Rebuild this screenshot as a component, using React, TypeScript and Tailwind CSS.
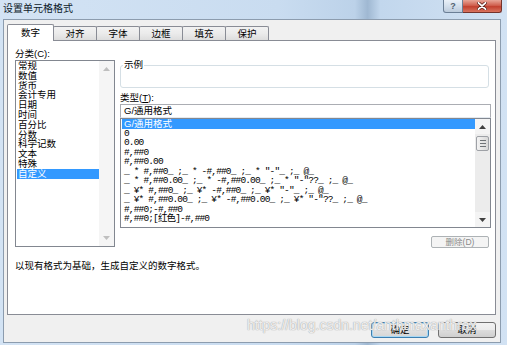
import React from "react";

const tabs = ["数字", "对齐", "字体", "边框", "填充", "保护"];

const categories = [
  "常规",
  "数值",
  "货币",
  "会计专用",
  "日期",
  "时间",
  "百分比",
  "分数",
  "科学记数",
  "文本",
  "特殊",
  "自定义",
];

const formats = [
  "G/通用格式",
  "0",
  "0.00",
  "#,##0",
  "#,##0.00",
  '_ * #,##0_ ;_ * -#,##0_ ;_ * "-"_ ;_ @_ ',
  '_ * #,##0.00_ ;_ * -#,##0.00_ ;_ * "-"??_ ;_ @_ ',
  '_ ¥* #,##0_ ;_ ¥* -#,##0_ ;_ ¥* "-"_ ;_ @_ ',
  '_ ¥* #,##0.00_ ;_ ¥* -#,##0.00_ ;_ ¥* "-"??_ ;_ @_ ',
  "#,##0;-#,##0",
  "#,##0;[红色]-#,##0",
];

function Arrow({ up, color }: { up?: boolean; color: string }) {
  return (
    <svg width="7" height="4" viewBox="0 0 7 4">
      <path d={up ? "M0 4 L3.5 0 L7 4 Z" : "M0 0 L3.5 4 L7 0 Z"} fill={color} />
    </svg>
  );
}

export default function App() {
  return (
    <div className="relative w-[507px] h-[345px] overflow-hidden bg-[linear-gradient(90deg,#d3e3f4_0%,#c9dcf0_55%,#bcd2e9_70%,#9fb8d2_72.5%,#c2d7ed_75%,#d2e2f3_100%)] font-['Liberation_Sans','Noto_Sans_CJK_SC',sans-serif] text-black">
      {/* title bar */}
      <div className="flex h-[19px] items-start">
        <div className="pl-[3px] pt-[3px] text-[10px] leading-[12px] text-[#0d1a2a]">设置单元格格式</div>
        <div className="ml-auto mr-[5px] flex">
          <div className="flex h-[13px] w-[20px] items-center justify-center rounded-bl-[3px] border border-t-0 border-[#6b7f96] bg-[linear-gradient(180deg,#e9f0f8_0%,#d3dfec_50%,#bccbdc_100%)] text-[9px] font-bold leading-[10px] text-[#51606f]">
            ?
          </div>
          <div className="flex h-[13px] w-[39px] items-center justify-center rounded-br-[3px] border border-l-0 border-t-0 border-[#74332b] bg-[linear-gradient(180deg,#e8a597_0%,#d0604f_45%,#c2402f_55%,#d9745f_100%)]">
            <svg width="10" height="8" viewBox="0 0 10 8">
              <path d="M1.5 0.8 L8.5 7.2 M8.5 0.8 L1.5 7.2" stroke="#5a1f18" strokeWidth="3.2" strokeLinecap="round" />
              <path d="M1.5 0.8 L8.5 7.2 M8.5 0.8 L1.5 7.2" stroke="#ffffff" strokeWidth="1.8" strokeLinecap="round" />
            </svg>
          </div>
        </div>
      </div>

      {/* dialog client area */}
      <div className="ml-[3px] flex h-[324px] w-[498px] flex-col border border-[#8c9cae] bg-[#f0f0f0] pl-[3px] pr-[4px]">
        {/* tabs */}
        <div className="flex h-[20px] items-end">
          {tabs.map((t, i) =>
            i === 0 ? (
              <div
                key={t}
                className="relative z-10 -mb-px flex h-[17px] w-[47px] items-center justify-center rounded-t-[2px] border border-b-0 border-[#898c95] bg-white pb-[1px] text-[9.5px] leading-[12px]"
              >
                {t}
              </div>
            ) : (
              <div
                key={t}
                className="-ml-px flex h-[14px] w-[44px] items-center justify-center rounded-t-[2px] border border-b-0 border-[#898c95] bg-[linear-gradient(180deg,#f2f2f2_0%,#ebebeb_50%,#dddddd_100%)] text-[9.5px] leading-[12px]"
              >
                {t}
              </div>
            )
          )}
        </div>

        {/* tab panel */}
        <div className="flex h-[275px] flex-col border border-[#898c95] bg-white pl-[7px] pt-[6px]">
          <div className="flex items-start">
            {/* category column */}
            <div className="flex w-[100px] flex-col">
              <div className="h-[13px] text-[9.5px] leading-[13px]">分类(C):</div>
              <div className="flex h-[187px] border border-[#828790]">
                <div className="flex-1 pl-[1px]">
                  {categories.map((c) => (
                    <div
                      key={c}
                      className={
                        c === "自定义"
                          ? "h-[9.8px] bg-[#3399ff] pl-[1px] text-[9.5px] leading-[9.8px] text-white"
                          : "h-[9.8px] pl-[1px] text-[9.5px] leading-[9.8px]"
                      }
                    >
                      {c}
                    </div>
                  ))}
                </div>
                <div className="flex w-[15px] flex-col items-center justify-between bg-[#f5f5f5] py-[6px]">
                  <Arrow up color="#bfbfbf" />
                  <Arrow color="#bfbfbf" />
                </div>
              </div>
            </div>

            {/* type column */}
            <div className="ml-[5px] flex w-[371px] flex-col">
              <div className="relative mt-[18px] h-[23px] w-[369px] rounded-[3px] border border-[#d5dfe5]">
                <div className="absolute -top-[7px] left-[2px] bg-white px-[1px] text-[9.5px] leading-[12px]">示例</div>
              </div>
              <div className="mt-[3px] h-[13px] text-[9.5px] leading-[13px]">
                类型(<span className="underline">T</span>):
              </div>
              <div className="h-[14px] border border-[#abadb3] border-b-[#e3e9ef] pl-[3px] text-[9.5px] leading-[12px]">
                G/通用格式
              </div>
              <div className="flex h-[110px] border border-[#828790]">
                <div className="flex-1 overflow-hidden pl-[1px] font-['Liberation_Mono','Noto_Sans_CJK_SC',monospace] text-[9.5px] tracking-[-0.85px]">
                  {formats.map((f, i) => (
                    <div
                      key={i}
                      className={
                        i === 0
                          ? "h-[9.5px] whitespace-pre bg-[#3399ff] pl-[2px] font-['Liberation_Sans','Noto_Sans_CJK_SC',sans-serif] leading-[9.5px] tracking-normal text-white"
                          : "h-[9.5px] whitespace-pre pl-[2px] leading-[9.5px]"
                      }
                    >
                      {f}
                    </div>
                  ))}
                </div>
                <div className="flex w-[15px] flex-col bg-[#ececec]">
                  <div className="flex h-[15px] items-center justify-center bg-[#f4f4f4]">
                    <Arrow up color="#404040" />
                  </div>
                  <div className="mx-[1px] mt-[2px] flex h-[15px] flex-col items-center justify-center gap-[2px] rounded-[2px] border border-[#9ea1a6] bg-[linear-gradient(90deg,#f3f3f3_0%,#e6e6e6_50%,#d8d8d8_100%)]">
                    <div className="h-px w-[6px] bg-[#6f7377]" />
                    <div className="h-px w-[6px] bg-[#6f7377]" />
                    <div className="h-px w-[6px] bg-[#6f7377]" />
                  </div>
                  <div className="flex-1" />
                  <div className="flex h-[15px] items-center justify-center bg-[#f4f4f4]">
                    <Arrow color="#404040" />
                  </div>
                </div>
              </div>
              <div className="mr-[2px] mt-[8px] flex h-[12px] w-[58px] items-center justify-center self-end rounded-[2px] border border-[#adb2b5] bg-[#f4f4f4] text-[8.5px] leading-[10px] text-[#8a8a8a]">
                删除(D)
              </div>
            </div>
          </div>

          <div className="mt-[12px] h-[12px] text-[9.5px] leading-[12px]">以现有格式为基础，生成自定义的数字格式。</div>
        </div>

        {/* dialog buttons */}
        <div className="mt-[7px] flex justify-end gap-[9px]">
          <div className="flex h-[16px] w-[58px] items-center justify-center rounded-[3px] border border-[#3c7fb1] bg-[linear-gradient(180deg,#f6f6f6_0%,#ededed_50%,#e0e0e0_51%,#d6d6d6_100%)] text-[9.5px] leading-[12px] shadow-[inset_0_0_0_1px_#a8d8f4]">
            确定
          </div>
          <div className="flex h-[16px] w-[58px] items-center justify-center rounded-[3px] border border-[#707070] bg-[linear-gradient(180deg,#f2f2f2_0%,#ebebeb_50%,#dddddd_51%,#cfcfcf_100%)] text-[9.5px] leading-[12px]">
            取消
          </div>
        </div>
      </div>

      {/* watermark */}
      <div className="pointer-events-none absolute left-[247px] top-[316px] z-20 whitespace-nowrap font-['Liberation_Sans',sans-serif] text-[14px] leading-[18px] text-white/80 [text-shadow:0_0_1px_#a8a8a8,0_0_1px_#a8a8a8]">
        https://blog.csdn.net/anthmaxanthrax
      </div>
    </div>
  );
}
